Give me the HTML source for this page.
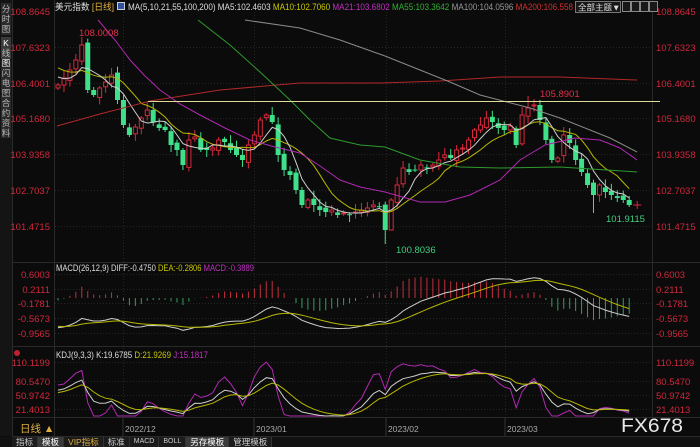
<!DOCTYPE html>
<html><head><meta charset="utf-8"><style>
html,body{margin:0;padding:0;background:#0b0b0b;width:700px;height:447px;overflow:hidden;font-family:"Liberation Sans","Noto Sans CJK SC",sans-serif}
svg{position:absolute;left:0;top:0}
text{font-family:"Liberation Sans","Noto Sans CJK SC",sans-serif}
#tabs{position:absolute;left:12px;top:437px;height:10px;display:flex;font-size:8.5px;line-height:10px;background:#111}
#tabs div{padding:0 4px;color:#ccc;border-right:1px solid #333;background:#1c1c1c;white-space:nowrap}
</style></head><body>
<svg id="s" width="700" height="447" viewBox="0 0 700 447" xmlns="http://www.w3.org/2000/svg">
<rect width="700" height="447" fill="#0b0b0b"/>
<rect x="0" y="0" width="12" height="436" fill="#141414"/>
<rect x="1" y="3" width="10" height="32" fill="#2a2a2a"/>
<rect x="1" y="37" width="10" height="22" fill="#3a3a3a"/>
<rect x="1" y="61" width="10" height="32" fill="#2a2a2a"/>
<rect x="1" y="95" width="10" height="43" fill="#2a2a2a"/>
<g font-size="8.5" fill="#bbb" text-anchor="middle">
<text x="6" y="12">分</text><text x="6" y="22">时</text><text x="6" y="32">图</text>
<text x="6" y="46" fill="#fff">K</text><text x="6" y="56">线</text><text x="6" y="66" fill="#fff">图</text>
<text x="6" y="76">闪</text><text x="6" y="86">电</text><text x="6" y="96">图</text>
<text x="6" y="106">合</text><text x="6" y="116">约</text><text x="6" y="126">资</text><text x="6" y="136">料</text>
</g>
<line x1="12.5" y1="0" x2="12.5" y2="436" stroke="#2a2a2a"/>
<line x1="54.5" y1="0" x2="54.5" y2="436" stroke="#2a2a2a"/>
<line x1="652.5" y1="0" x2="652.5" y2="418" stroke="#2a2a2a"/>
<line x1="12" y1="262.5" x2="700" y2="262.5" stroke="#2a2a2a"/>
<line x1="12" y1="346.5" x2="700" y2="346.5" stroke="#2a2a2a"/>
<line x1="12" y1="417.5" x2="700" y2="417.5" stroke="#2a2a2a"/>
<line x1="12" y1="436.5" x2="700" y2="436.5" stroke="#2a2a2a"/>
<g id="grid" stroke="#262626" stroke-dasharray="1,2"></g>
<g font-size="9.5" fill="#d0283c" text-anchor="end">
<text x="50" y="15">108.8645</text><text x="50" y="51">107.6323</text><text x="50" y="87">106.4001</text><text x="50" y="122">105.1680</text><text x="50" y="158">103.9358</text><text x="50" y="194">102.7037</text><text x="50" y="230">101.4715</text>
<text x="50" y="278">0.6003</text><text x="50" y="293">0.2111</text><text x="50" y="307">-0.1781</text><text x="50" y="322">-0.5673</text><text x="50" y="337">-0.9565</text>
<text x="50" y="366">110.1199</text><text x="50" y="385">80.5470</text><text x="50" y="399">50.9742</text><text x="50" y="413">21.4013</text>
</g>
<g font-size="9.5" fill="#d0283c">
<text x="656" y="15">108.8645</text><text x="656" y="51">107.6323</text><text x="656" y="87">106.4001</text><text x="656" y="122">105.1680</text><text x="656" y="158">103.9358</text><text x="656" y="194">102.7037</text><text x="656" y="230">101.4715</text>
<text x="656" y="278">0.6003</text><text x="656" y="293">0.2111</text><text x="656" y="307">-0.1781</text><text x="656" y="322">-0.5673</text><text x="656" y="337">-0.9565</text>
<text x="656" y="366">110.1199</text><text x="656" y="385">80.5470</text><text x="656" y="399">50.9742</text><text x="656" y="413">21.4013</text>
</g>
<g id="chart"></g>
<polyline fill="none" stroke="#b02828" stroke-width="1" points="57,126 100,114 150,101 220,90 300,83 380,83 440,81 500,77 560,77 637,80"/>
<polyline fill="none" stroke="#8a8a8a" stroke-width="1" points="245,20 300,28 340,40 385,56 420,70 450,82 480,95 530,108 560,118 610,138 637,152"/>
<polyline fill="none" stroke="#2e9a2e" stroke-width="1" points="198,20 230,45 260,72 290,100 310,120 330,138 360,145 385,147 420,160 460,167 500,168 560,167 637,172"/>
<polyline fill="none" stroke="#b028b0" stroke-width="1" points="98,20 115,40 130,60 145,76 160,90 180,104 200,115 225,128 250,140 275,147 300,153 320,166 340,180 360,187 385,192 420,202 445,202 470,195 500,180 520,160 545,145 575,138 600,140 620,148 637,160"/>
<line x1="148" y1="101.5" x2="660" y2="101.5" stroke="#dddd99" stroke-width="1"/>
<g font-size="9.5">
<text x="79" y="36" fill="#e0304a">108.0008</text>
<text x="540" y="97" fill="#e0304a">105.8901</text>
<text x="396" y="253" fill="#40d080">100.8036</text>
<text x="606" y="222" fill="#40d080">101.9115</text>
</g>
<rect x="117" y="2" width="8" height="8" fill="#ccc"/><rect x="118" y="3" width="6" height="6" fill="#3050a0"/>
<text x="55" y="10" font-size="9.3" textLength="59" lengthAdjust="spacingAndGlyphs" fill="#ddd">美元指数 <tspan fill="#e0b040">[日线]</tspan></text>
<text x="128" y="10" font-size="9.3" textLength="445" lengthAdjust="spacingAndGlyphs" fill="#ddd">MA(5,10,21,55,100,200) MA5:102.4603 <tspan fill="#c8c800">MA10:102.7060</tspan> <tspan fill="#c030c0">MA21:103.6802</tspan> <tspan fill="#30b030">MA55:103.3642</tspan> <tspan fill="#999">MA100:104.0596</tspan> <tspan fill="#d03030">MA200:106.558</tspan></text>
<rect x="575.5" y="1.5" width="45" height="11" fill="#181818" stroke="#777"/>
<text x="578" y="10.5" font-size="8.5" fill="#ddd">全部主题▼</text>
<g fill="#181818" stroke="#888"><rect x="622.5" y="1.5" width="8" height="10"/><rect x="631.5" y="1.5" width="8" height="10"/><rect x="640.5" y="1.5" width="8" height="10"/><rect x="649.5" y="1.5" width="8" height="10"/></g>
<text x="56" y="271" font-size="9.3" textLength="198" lengthAdjust="spacingAndGlyphs" fill="#ddd">MACD(26,12,9) DIFF:-0.4750 <tspan fill="#c8c800">DEA:-0.2806</tspan> <tspan fill="#c030c0">MACD:-0.3889</tspan></text>
<text x="56" y="358" font-size="9.3" textLength="152" lengthAdjust="spacingAndGlyphs" fill="#ddd">KDJ(9,3,3) K:19.6785 <tspan fill="#c8c800">D:21.9269</tspan> <tspan fill="#c030c0">J:15.1817</tspan></text>
<circle cx="17" cy="353" r="3" fill="#c02030"/>
<text x="20" y="432" font-size="10.5" fill="#e0b040">日线 ▲</text>
<g font-size="8.5" fill="#aaa">
<text x="125" y="432">2022/12</text><text x="256" y="432">2023/01</text><text x="388" y="432">2023/02</text><text x="507" y="432">2023/03</text>
</g>
<g stroke="#333"><line x1="123" y1="418" x2="123" y2="436"/><line x1="254" y1="418" x2="254" y2="436"/><line x1="386" y1="418" x2="386" y2="436"/><line x1="505" y1="418" x2="505" y2="436"/></g>
<rect x="0" y="437" width="700" height="10" fill="#111"/>
<text x="621" y="432" font-size="19" fill="#e8e8e8" textLength="62" lengthAdjust="spacingAndGlyphs">FX678</text>
</svg>
<div id="tabs"><div>指标</div><div style="background:#3a3a3a;color:#fff">模板</div><div style="color:#e0b040">VIP指标</div><div>标准</div><div style="font-size:7px">MACD</div><div style="font-size:7px">BOLL</div><div style="background:#3a3a3a;color:#fff">另存模板</div><div>管理模板</div></div>
<script>
var NS="http://www.w3.org/2000/svg",ch=document.getElementById('chart'),gr=document.getElementById('grid');
function el(t,a,p){var e=document.createElementNS(NS,t);for(var k in a)e.setAttribute(k,a[k]);(p||ch).appendChild(e);return e;}
[47,83,118,154,190,226,274,289,303,318,333,362,381,395,409].forEach(function(y){el('line',{x1:55,x2:652,y1:y+.5,y2:y+.5},gr);});
[123,254,386,505].forEach(function(x){el('line',{x1:x+.5,x2:x+.5,y1:12,y2:416},gr);});
var Y=[85,78,70,60,45,90,95,88,82,75,100,125,135,127,118,110,122,128,130,145,150,165,140,137,150,150,148,140,142,150,155,160,145,135,120,115,122,155,170,175,190,205,200,205,210,212,210,215,213,215,212,210,208,205,207,230,200,185,168,172,170,165,168,165,160,155,158,150,148,140,130,125,118,122,128,130,126,145,115,108,105,120,140,160,158,135,143,160,172,185,195,185,192,195,198,200,205];
var n=Y.length,dx=5.95,x0=58;
var O=[],H=[],L=[];
for(var i=0;i<n;i++){var o=i?Y[i-1]+((i*7)%5-2)*1.2:88;O.push(o);var hi=Math.min(o,Y[i])-2-(i*13%7),lo=Math.max(o,Y[i])+2+(i*11%6);H.push(hi);L.push(lo);}
H[4]=37;L[55]=244;H[79]=96;L[90]=213;L[56]=222;H[36]=107;
for(var i=0;i<n;i++){var x=x0+i*dx,o=O[i],c=Y[i],up=c<o,col=up?'#d8283c':'#3ee08a';
el('line',{x1:x,x2:x,y1:H[i],y2:L[i],stroke:col,'stroke-width':1});
var t=Math.min(o,c),h=Math.max(Math.abs(o-c),1);
if(up)el('rect',{x:x-2,y:t,width:4,height:h,fill:'#0b0b0b',stroke:col,'stroke-width':1});else el('rect',{x:x-2.5,y:t,width:5,height:h,fill:col});}
el('line',{x1:x0+n*dx-2,x2:x0+n*dx+6,y1:205,y2:205,stroke:'#d8283c'});el('line',{x1:x0+n*dx+2,x2:x0+n*dx+2,y1:201,y2:209,stroke:'#d8283c'});
var W=[];for(var i=0;i<40;i++)W.push(-60+i*3.6);var A=W.concat(Y);
function ma(p){var r=[];for(var i=40;i<A.length;i++){var s=0;for(var j=0;j<p;j++)s+=A[i-j];r.push(s/p);}return r;}
function pl(arr,col,f){var pts=arr.map(function(v,i){return (x0+i*dx).toFixed(1)+','+f(v).toFixed(1);}).join(' ');el('polyline',{points:pts,fill:'none',stroke:col,'stroke-width':1});}
var id=function(v){return Math.max(v,14);};
pl(ma(10),'#b8b800',id);pl(ma(5),'#cfcfcf',id);
var P=A.map(function(y){return 108.8645-(y-12)/28.95;});
function ema(a,n){var k=2/(n+1),r=[a[0]];for(var i=1;i<a.length;i++)r.push(r[i-1]+k*(a[i]-r[i-1]));return r;}
var e12=ema(P,12),e26=ema(P,26),D=P.map(function(v,i){return e12[i]-e26[i];}),E=ema(D,9);
var dif=D.slice(40),dea=E.slice(40);
var sc=37,z=298;
for(var i=0;i<n;i++){var h=2*(dif[i]-dea[i]),x=x0+i*dx;el('line',{x1:x,x2:x,y1:z,y2:z-h*sc,stroke:h>0?'#c03040':'#30a060','stroke-width':1});}
pl(dif,'#cfcfcf',function(v){return z-v*sc;});pl(dea,'#b8b800',function(v){return z-v*sc;});
var K=50,Dd=50,ks=[],ds=[],js=[];
for(var i=0;i<n;i++){var hh=1e9,ll=-1e9;for(var j=Math.max(0,i-8);j<=i;j++){hh=Math.min(hh,H[j]);ll=Math.max(ll,L[j]);}
var rsv=(ll-Y[i])/Math.max(ll-hh,1)*100;K=K*2/3+rsv/3;Dd=Dd*2/3+K/3;ks.push(K);ds.push(Dd);js.push(3*K-2*Dd);}
var kf=function(v){return Math.min(Math.max(409-(v-21.4)*0.53,350),416);};
pl(js,'#b028b0',kf);pl(ks,'#cfcfcf',kf);pl(ds,'#b8b800',kf);
</script>
</body></html>
